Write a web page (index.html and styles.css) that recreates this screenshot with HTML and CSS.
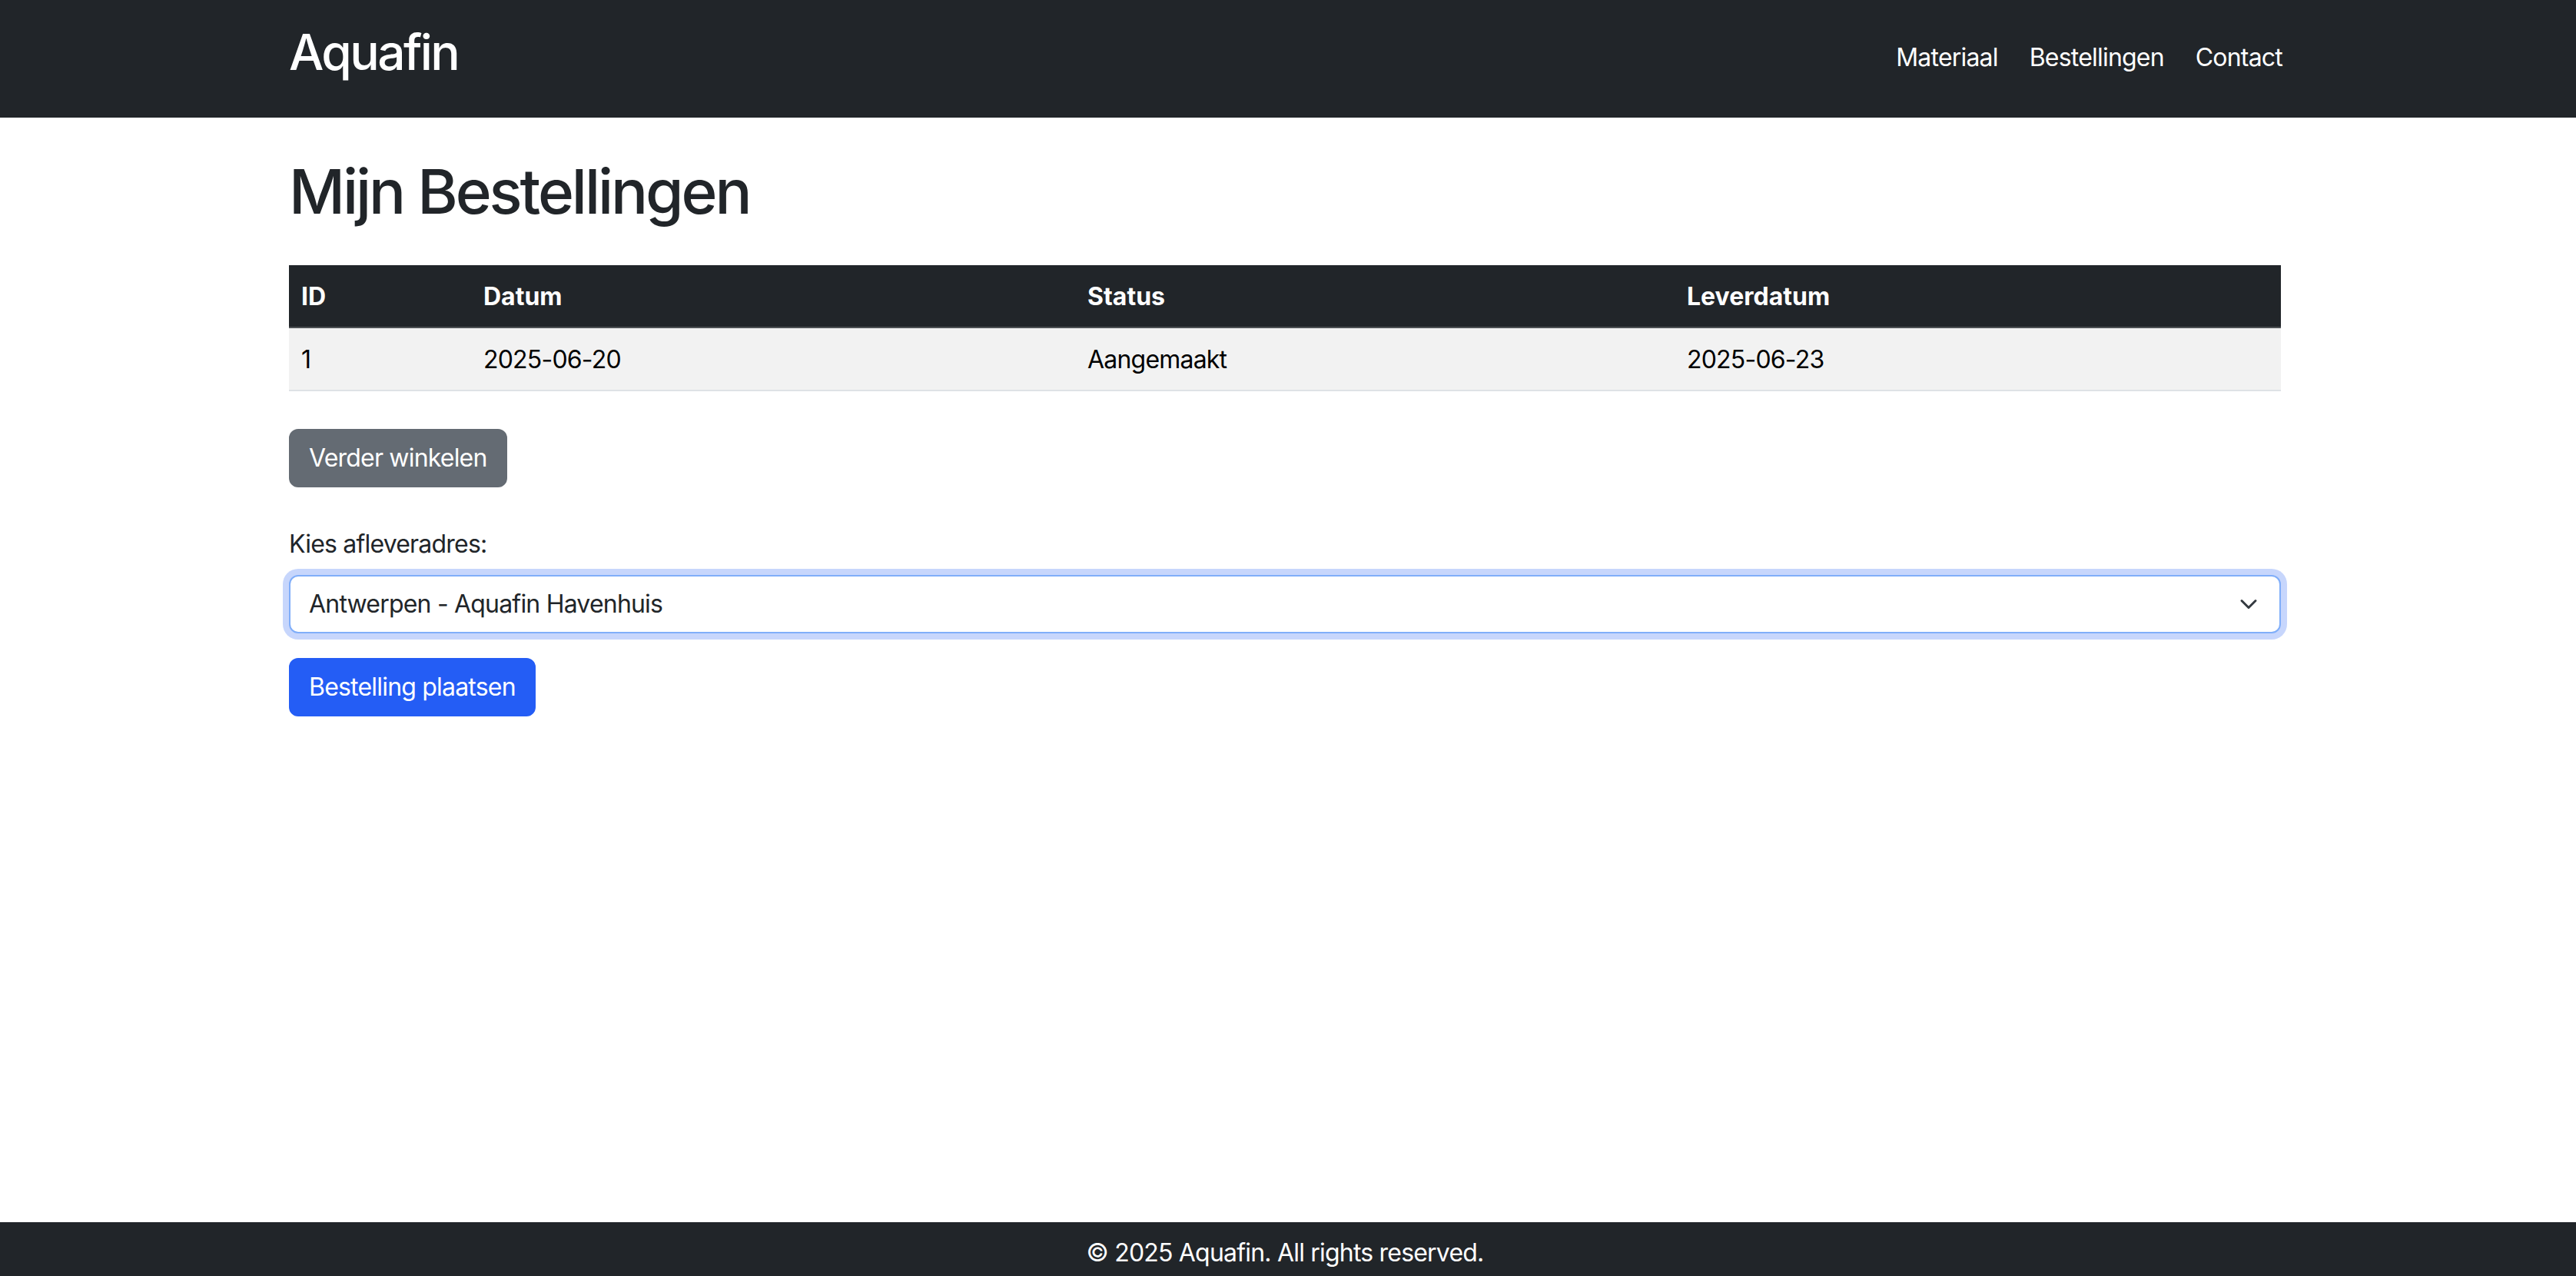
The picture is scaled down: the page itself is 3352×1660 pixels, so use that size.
FILE: index.html
```html
<!DOCTYPE html>
<html lang="nl">
<head>
<meta charset="utf-8">
<title>Mijn Bestellingen - Aquafin</title>
<link rel="stylesheet" href="styles.css">
</head>
<body>
<header class="navbar">
  <div class="container navbar-inner">
    <a class="brand" href="#">Aquafin</a>
    <nav class="nav">
      <a class="nav-link" href="#">Materiaal</a>
      <a class="nav-link" href="#">Bestellingen</a>
      <a class="nav-link" href="#">Contact</a>
    </nav>
  </div>
</header>

<main class="main">
  <div class="container">
    <h1 class="title">Mijn Bestellingen</h1>

    <table class="orders">
      <thead>
        <tr>
          <th class="col-id">ID</th>
          <th class="col-date">Datum</th>
          <th class="col-status">Status</th>
          <th class="col-delivery">Leverdatum</th>
        </tr>
      </thead>
      <tbody>
        <tr>
          <td>1</td>
          <td>2025-06-20</td>
          <td>Aangemaakt</td>
          <td>2025-06-23</td>
        </tr>
      </tbody>
    </table>

    <a class="btn btn-secondary" href="#">Verder winkelen</a>

    <form class="order-form">
      <label class="form-label" for="adres">Kies afleveradres:</label>
      <div class="select-wrap">
        <select id="adres" class="form-select">
          <option>Antwerpen - Aquafin Havenhuis</option>
        </select>
        <svg class="chevron" width="32" height="24" viewBox="0 0 16 16" aria-hidden="true">
          <path d="m2 5 6 6 6-6" fill="none" stroke="#343a40" stroke-width="2" stroke-linecap="round" stroke-linejoin="round"/>
        </svg>
      </div>
      <button type="button" class="btn btn-primary">Bestelling plaatsen</button>
    </form>
  </div>
</main>

<footer class="footer">
  <div class="container footer-inner">© 2025 Aquafin. All rights reserved.</div>
</footer>
</body>
</html>
```

FILE: styles.css
```css
* {
  box-sizing: border-box;
}

html, body {
  margin: 0;
  padding: 0;
}

body {
  font-family: Inter, "Noto Sans", "Liberation Sans", sans-serif;
  font-size: 32px;
  line-height: 48px;
  letter-spacing: -0.8px;
  color: #212529;
  background: #ffffff;
  min-height: 100vh;
  display: flex;
  flex-direction: column;
}

.container {
  width: 2592px;
  margin: 0 auto;
}

/* Navbar */
.navbar {
  background: #212529;
  height: 153px;
  padding-right: 8px;
  flex: 0 0 auto;
}

.navbar-inner {
  display: flex;
  justify-content: space-between;
  align-items: flex-start;
  padding-top: 30px;
}

.brand {
  color: #ffffff;
  text-decoration: none;
  font-size: 64px;
  line-height: 76px;
  font-weight: 500;
  letter-spacing: -2.6px;
}

.nav {
  display: flex;
  gap: 41px;
  margin-top: 21px;
  margin-right: -2px;
}

.nav-link {
  color: #ffffff;
  text-decoration: none;
  font-size: 32px;
  line-height: 48px;
}

/* Main */
.main {
  flex: 1 0 auto;
  padding-top: 48px;
  padding-right: 8px;
}

.title {
  margin: 0 0 48px 0;
  font-size: 80px;
  line-height: 96px;
  font-weight: 500;
  letter-spacing: -3.1px;
  color: #212529;
}

.orders {
  width: 100%;
  border-collapse: collapse;
  margin-bottom: 49px;
  table-layout: fixed;
}

.orders th,
.orders td {
  text-align: left;
  padding: 17px 16px 15px 16px;
  font-size: 32px;
  line-height: 48px;
}

.orders thead th {
  background: #212529;
  color: #ffffff;
  font-weight: 700;
  letter-spacing: 0;
  border-bottom: 2px solid #4d5154;
}

.orders tbody td {
  background: #f2f2f2;
  color: #000000;
  border-bottom: 2px solid #dee2e6;
}

.col-id { width: 237px; }
.col-date { width: 786px; }
.col-status { width: 780px; }
.col-delivery { width: 789px; }

/* Buttons */
.btn {
  display: inline-block;
  font-family: inherit;
  font-size: 32px;
  line-height: 48px;
  letter-spacing: -0.8px;
  padding: 12px 24px;
  border: 2px solid transparent;
  border-radius: 12px;
  color: #ffffff;
  text-decoration: none;
  cursor: pointer;
}

.btn-secondary {
  background: #646b73;
  border-color: #646b73;
}

.btn-primary {
  background: #245df5;
  border-color: #245df5;
  margin-top: 32px;
}

/* Form */
.order-form {
  margin-top: 50px;
}

.form-label {
  display: block;
  margin-bottom: 16px;
  font-size: 32px;
  line-height: 48px;
  color: #212529;
}

.select-wrap {
  position: relative;
}

.form-select {
  display: block;
  width: 100%;
  height: 76px;
  appearance: none;
  -webkit-appearance: none;
  font-family: inherit;
  font-size: 32px;
  line-height: 48px;
  letter-spacing: -0.8px;
  color: #212529;
  background: #ffffff;
  padding: 12px 72px 12px 24px;
  border: 2px solid #80aef9;
  border-radius: 12px;
  box-shadow: 0 0 0 8px #c7d6fc;
  outline: none;
}

.chevron {
  position: absolute;
  right: 26px;
  top: 26px;
  pointer-events: none;
}

/* Footer */
.footer {
  background: #212529;
  color: #ffffff;
  height: 70px;
  padding: 16px 8px 6px 0;
  flex: 0 0 auto;
}

.footer-inner {
  text-align: center;
  font-size: 32px;
  line-height: 48px;
}
```
